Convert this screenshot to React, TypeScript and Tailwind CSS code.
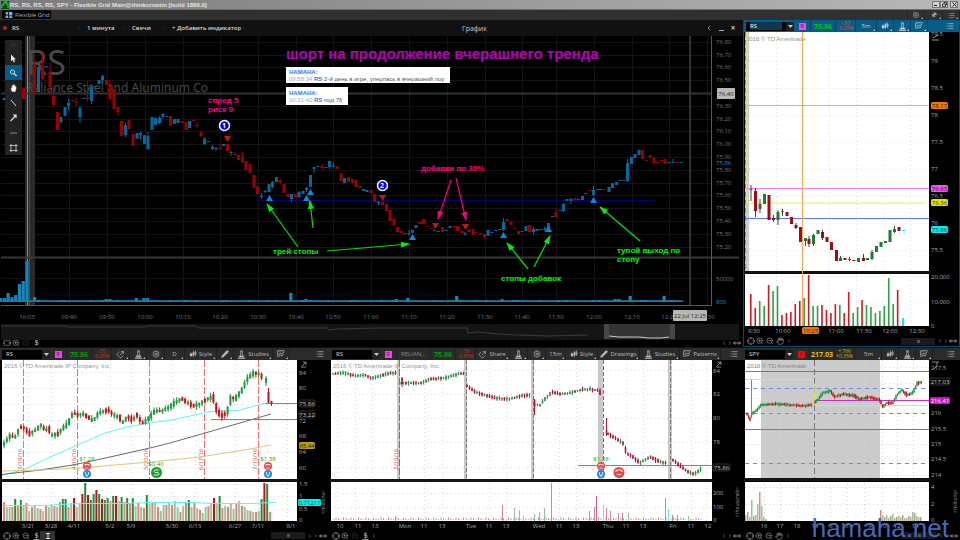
import type { ReactNode } from 'react'
import {
  ChevronDown,
  ChevronLeft,
  ChevronRight,
  Crosshair,
  FlaskConical,
  Grid2x2,
  Hand,
  List,
  MoveHorizontal,
  Pencil,
  Pin,
  Settings,
  Share,
  ZoomIn,
  ZoomOut,
} from 'lucide-react'

type Point = [number, number]
// x, body top, body bottom, rising, optional wick top and bottom
type Candle = [number, number, number, 0 | 1, number?, number?]
type Label = [string, number, number]

const minuteCandles: Candle[] = [
  [4, 98, 100, 1], [23.5, 88, 99, 0], [27, 98, 99, 1], [34.5, 64, 92, 0, 61, 93], [38.5, 67, 92, 1],
  [42.5, 67, 79, 0, 53, 80], [46, 66, 67, 1], [50, 72, 87, 0, 62, 93], [53.5, 96, 105, 0, 87, 107],
  [57.5, 112, 130, 0], [61, 117, 122, 1, 117, 124], [65, 107, 116, 1], [68.5, 103, 106, 1, 99, 110],
  [72.5, 100, 101, 0], [76, 102, 103, 0, 98, 106], [80, 108, 117, 1, 106, 123], [84, 98, 99, 1],
  [87.5, 97, 99, 0, 81, 102], [91.5, 87, 101, 1, 84, 104], [95, 86, 87, 1], [99, 80, 84, 1],
  [102.5, 76, 80, 1, 75, 83], [106.5, 80, 85, 0], [110, 84, 99, 0, 80, 100], [114, 90, 109, 0],
  [118, 107, 112, 0, 107, 116], [121.5, 121, 136, 0], [125.5, 125, 135, 1, 123, 137], [129, 120, 129, 0],
  [133, 134, 146, 0], [137, 133, 139, 1], [140.5, 133, 135, 1, 132, 140], [144.5, 135, 144, 1],
  [148, 136, 149, 1, 132, 150], [152, 117, 130, 1], [155.5, 118, 125, 1], [159.5, 118, 123, 1, 116, 124],
  [163, 114, 117, 1, 113, 119], [167, 116, 117, 1], [170.5, 116, 126, 0], [174.5, 119, 124, 1],
  [178, 119, 123, 1], [182, 121, 123, 0], [186, 122, 130, 0], [189.5, 121, 128, 1], [193.5, 120, 121, 0],
  [197, 125, 126, 0, 122, 128], [201, 132, 136, 0, 131, 137], [204.5, 139, 144, 1, 137, 145],
  [208.5, 141, 142, 1], [212.5, 147, 149, 1, 145, 150], [216, 148, 149, 1, 147, 151],
  [220, 148, 149, 0, 144, 150], [223.5, 144, 146, 1], [227.5, 144, 151, 0], [231, 152, 153, 1, 151, 156],
  [235, 154, 155, 0, 152, 156], [238.5, 155, 160, 0], [242.5, 157, 162, 0, 152, 163], [246, 161, 170, 0],
  [250, 164, 173, 0], [254, 175, 188, 0], [257.5, 187, 194, 0, 185, 195], [261.5, 196, 197, 1, 193, 199],
  [265, 191, 192, 1, 190, 193], [269, 184, 192, 1], [272.5, 182, 187, 1, 181, 188], [276.5, 177, 182, 1],
  [280, 180, 183, 0], [284, 184, 193, 0], [288, 194, 197, 0], [291.5, 194, 199, 1, 194, 202],
  [295.5, 194, 197, 0], [299, 192, 197, 1, 191, 198], [303, 191, 194, 1], [306.5, 188, 190, 1, 187, 192],
  [310.5, 175, 187, 1], [314, 167, 169, 1, 167, 173], [318, 166, 167, 1], [322, 166, 168, 0, 164, 170],
  [326, 167, 168, 1], [329.5, 161, 167, 1, 161, 169], [333.5, 166, 167, 1, 162, 167], [337, 166, 169, 0],
  [341, 173, 181, 0], [344.5, 178, 183, 1], [348.5, 177, 182, 0], [352.5, 179, 183, 0], [356, 180, 187, 0],
  [360, 186, 188, 0], [363.5, 189, 191, 1], [367, 190, 192, 1], [371, 190, 193, 0], [374.5, 194, 202, 0],
  [378.5, 202, 203, 1, 201, 205], [382.5, 202, 205, 0], [386.5, 204, 211, 0], [390, 210, 221, 0],
  [394, 219, 225, 0, 217, 226], [397.5, 227, 232, 0], [401.5, 231, 233, 0], [405, 233, 234, 1],
  [409, 233, 234, 1, 230, 236], [412.5, 230, 233, 1], [416, 225, 228, 1], [420, 222, 224, 0],
  [423.5, 219, 224, 0], [427, 226, 227, 0], [431, 228, 229, 0], [434.5, 230, 231, 1], [438.5, 231, 232, 1],
  [442.5, 227, 232, 0], [446, 230, 231, 1], [450, 226, 228, 1], [454, 226, 227, 0], [457.5, 226, 231, 0],
  [461.5, 231, 233, 0], [465, 233, 234, 1, 232, 236], [469, 229, 232, 0], [473, 229, 235, 0],
  [476.5, 232, 233, 0], [480.5, 233, 235, 0], [484.5, 234, 237, 0, 234, 239], [488, 230, 236, 1],
  [492, 232, 233, 1], [495.5, 230, 231, 1], [499.5, 229, 230, 1], [503.5, 222, 230, 1, 218, 231],
  [507, 219, 221, 0], [511, 222, 225, 0], [514.5, 228, 229, 0], [518.5, 231, 234, 0], [522, 231, 232, 1],
  [526, 226, 231, 1], [529.5, 225, 232, 0], [533.5, 229, 232, 1, 227, 234], [537, 229, 231, 1],
  [541, 229, 230, 1], [545, 228, 230, 1, 226, 232], [548.5, 223, 228, 1], [552.5, 216, 217, 1],
  [556, 212, 217, 0, 208, 218], [560, 210, 211, 1], [563.5, 204, 211, 1, 203, 212], [567, 199, 201, 1],
  [571, 199, 201, 1, 198, 204], [575, 198, 200, 0], [578.5, 199, 200, 1], [582.5, 196, 200, 1],
  [586, 193, 194, 1], [590, 190, 191, 0], [593.5, 190, 195, 1, 186, 196], [597.5, 189, 190, 1],
  [601, 189, 190, 1], [605, 189, 190, 0], [609, 187, 192, 1], [612.5, 183, 188, 1], [616.5, 182, 185, 1],
  [620, 180, 181, 1], [624, 180, 181, 1], [627.5, 163, 181, 1, 159, 182], [631.5, 157, 164, 1],
  [635, 154, 158, 1], [639, 150, 155, 1], [642.5, 150, 159, 0], [646.5, 160, 161, 0], [650, 155, 158, 0],
  [654, 158, 163, 0, 157, 164], [657.5, 162, 163, 0], [661.5, 160, 161, 0], [665, 159, 164, 0],
  [669, 162, 163, 1], [673, 162, 163, 1, 159, 163], [677, 162, 163, 0], [681, 162, 163, 1],
]

const fiveMinuteCandles: Candle[] = [
  [751, 189, 190, 1, 185, 201], [755.5, 191, 211, 0, 188, 217], [760, 204, 209, 1, 199, 213],
  [764.5, 194, 204, 1], [769, 195, 220, 0], [773.5, 218, 220, 0, 215, 222], [778, 212, 220, 1, 210, 225],
  [782.5, 211, 212, 1, 209, 216], [787, 212, 216, 0], [791.5, 217, 224, 0], [796, 225, 228, 0, 223, 229],
  [800.5, 227, 242, 0], [805.5, 238, 241, 1, 238, 246], [809, 239, 244, 0, 236, 247],
  [813.5, 235, 244, 1, 234, 246], [818, 230, 234, 1], [822.5, 232, 238, 0, 230, 240],
  [827, 237, 242, 0], [831.5, 242, 250, 0], [836.5, 250, 261, 0], [840.5, 258, 261, 1, 256, 261],
  [845, 258, 260, 0], [849.5, 259, 260, 1, 257, 261], [854, 260, 261, 0], [858.5, 258, 262, 1],
  [863.5, 258, 261, 0, 254, 261], [867.5, 258, 260, 1], [872, 252, 259, 1, 250, 260],
  [876.5, 246, 252, 1], [881, 242, 247, 1], [885.5, 241, 243, 1], [890, 230, 242, 1],
  [894.5, 229, 232, 1, 226, 233], [899, 227, 231, 0],
]

const fiveMinuteVolume = [
  32, 18, 25, 20, 41, 35, 40, 11, 13, 14, 22, 25, 28, 51, 20, 20, 21, 16, 13, 22, 21, 13, 34, 13, 19,
  26, 21, 19, 13, 15, 20, 48, 22, 36,
]
const fiveMinuteFall = [1, 1, 0, 0, 1, 0, 0, 1, 1, 1, 1, 1, 0, 1, 0, 0, 1, 1, 1, 1, 0, 1, 1, 0, 0, 1, 0, 0, 0, 0, 0, 0, 0, 1]

const dailyVolume = [
  19, 14, 14, 14, 22, 16, 21, 16, 18, 10, 14, 15, 13, 12, 10, 15, 14, 16, 15, 14, 19, 22, 22, 14, 18, 23,
  14, 17, 27, 38, 26, 21, 27, 31, 27, 22, 21, 23, 20, 25, 25, 20, 24, 19, 23, 18, 23, 15, 18, 14, 13, 26,
  17, 18, 18, 14, 10, 16, 16, 18, 16, 20, 14, 9, 15, 18, 21, 14, 18, 13, 11, 8, 14, 15, 18, 23, 18, 25,
  13, 15, 14, 17, 12, 18, 20, 15, 14, 11, 10, 9, 9, 10, 22, 38, 37, 9,
]

const dailyPath: Point[] = [
  [4, 444], [10, 436], [16, 437], [20, 427], [24, 428], [30, 434], [36, 430], [41, 425], [45, 430], [49, 429],
  [52, 435], [58, 434], [63, 428], [67, 425], [70, 420], [73, 413], [78, 415], [83, 414], [88, 417], [93, 421],
  [99, 413], [105, 411], [108, 410], [114, 415], [120, 418], [122, 423], [128, 417], [133, 420], [137, 415],
  [142, 423], [145, 422], [150, 417], [155, 411], [162, 411], [170, 407], [176, 402], [182, 399], [188, 403],
  [194, 406], [200, 404], [207, 399], [213, 397], [217, 410], [221, 416], [227, 413], [231, 398], [236, 398],
  [242, 390], [248, 378], [254, 373], [260, 374], [264, 380],
]

const quarterPaths: Point[][] = [
  [[333, 374], [345, 373], [355, 376], [365, 375], [372, 378], [380, 376], [390, 373], [397, 373]],
  [[401, 383], [410, 383], [422, 383], [430, 379], [445, 378], [455, 375], [464, 373]],
  [[467, 386], [475, 392], [485, 395], [495, 398], [510, 399], [520, 396], [530, 395]],
  [[535, 405], [540, 405], [545, 399], [552, 392], [560, 394], [570, 393], [580, 390], [590, 389], [599, 391]],
  [[608, 434], [615, 438], [623, 443], [627, 454], [632, 456], [640, 463], [650, 457], [660, 462], [667, 463]],
  [[673, 460], [680, 466], [690, 473], [695, 474], [702, 468]],
]

const spyPaths: Point[][] = [
  [[747, 414], [750, 419], [753, 413], [757, 410], [761, 405], [775, 404], [790, 405], [805, 406], [812, 405]],
  [
    [815, 402], [818, 400], [823, 393], [830, 391], [835, 397], [840, 395], [845, 394], [855, 396], [860, 399],
    [870, 397], [880, 400], [883, 407], [887, 403], [893, 403], [897, 395], [902, 390], [907, 395], [913, 393],
    [917, 384], [922, 382],
  ],
]

function createRandom(seed: number) {
  let value = seed
  return () => {
    value = (value * 16807) % 2147483647
    return value / 2147483647
  }
}

// Fills a price path with evenly spaced candles around it.
function candlesAlong(path: Point[], step: number, size: number, seed: number): Candle[] {
  const random = createRandom(seed)
  const candles: Candle[] = []
  let index = 0
  for (let x = path[0][0]; x <= path[path.length - 1][0]; x += step) {
    while (index < path.length - 2 && path[index + 1][0] < x) index += 1
    const [x0, y0] = path[index]
    const [x1, y1] = path[index + 1]
    const slope = (y1 - y0) / (x1 - x0)
    const middle = y0 + slope * (x - x0)
    const half = (0.4 + random() * 0.6) * size + Math.abs(slope) * step * 0.25
    const rising = slope + (random() - 0.5) * 2 < 0 ? 1 : 0
    candles.push([
      x,
      middle - half,
      middle + half,
      rising,
      middle - half - random() * size * 1.4,
      middle + half + random() * size * 1.4,
    ])
  }
  return candles
}

interface CandlesProps {
  data: Candle[]
  width: number
  up: string
  down: string
  wick?: string
}

function Candles({ data, width, up, down, wick }: CandlesProps) {
  return (
    <g>
      {data.map(([x, top, bottom, rising, high, low]) => {
        const color = rising ? up : down
        return (
          <g key={x}>
            {high !== undefined && low !== undefined ? (
              <rect x={x - 0.5} y={high} width={1} height={low - high} fill={wick ?? color} />
            ) : null}
            <rect x={x - width / 2} y={top} width={width} height={Math.max(1, bottom - top)} fill={color} />
          </g>
        )
      })}
    </g>
  )
}

interface GridLinesProps {
  xs: number[]
  ys: number[]
  box: [number, number, number, number]
  color: string
  dash?: string
}

function GridLines({ xs, ys, box, color, dash }: GridLinesProps) {
  const [left, top, right, bottom] = box
  return (
    <g stroke={color} strokeWidth={1} strokeDasharray={dash}>
      {xs.map((x) => (
        <line key={`x${x}`} x1={x + 0.5} x2={x + 0.5} y1={top} y2={bottom} />
      ))}
      {ys.map((y) => (
        <line key={`y${y}`} x1={left} x2={right} y1={y + 0.5} y2={y + 0.5} />
      ))}
    </g>
  )
}

function Labels({ items, anchor = 'start', fill = '#a8a8a8' }: { items: Label[]; anchor?: 'start' | 'middle'; fill?: string }) {
  return (
    <g fill={fill} textAnchor={anchor}>
      {items.map(([text, x, y]) => (
        <text key={`${text}-${x}`} x={x} y={y}>
          {text}
        </text>
      ))}
    </g>
  )
}

interface PriceTagProps {
  text: string
  x: number
  y: number
  width: number
  fill: string
  color: string
  stroke?: string
}

function PriceTag({ text, x, y, width, fill, color, stroke }: PriceTagProps) {
  return (
    <g>
      <rect x={x} y={y - 3} width={width} height={7} rx={1.5} fill={fill} stroke={stroke} strokeWidth={0.5} />
      <text x={x + width / 2} y={y + 3} textAnchor="middle" fill={color}>
        {text}
      </text>
    </g>
  )
}

function CandleIcon() {
  return (
    <svg viewBox="0 0 10 10" className="size-2 shrink-0" aria-hidden="true">
      <path d="M2.5 3v6M5.5 1v8M8 0.5v7" stroke="currentColor" strokeWidth={0.8} />
      <path d="M1 4.5h3v3H1zM4.5 3h2.2v4H4.5z" fill="currentColor" />
      <path d="M7.3 2.5H9v3H7.3z" fill="none" stroke="currentColor" strokeWidth={0.7} />
    </svg>
  )
}

function FlaskIcon() {
  return (
    <svg viewBox="0 0 10 10" className="size-[9px] shrink-0" fill="none" stroke="currentColor" aria-hidden="true">
      <path d="M3.5 1h3M4.200 1v3.500L2 8h6L5.800 4.500V1" strokeWidth={0.8} />
      <path d="M3.500 6h3l1 1.800h-5z" fill="currentColor" stroke="none" />
      <path d="M1 9.300h8" strokeWidth={1} />
    </svg>
  )
}

function PatternsIcon() {
  return (
    <svg viewBox="0 0 10 10" className="size-2 shrink-0" fill="none" stroke="currentColor" strokeWidth={1} aria-hidden="true">
      <path d="M1 1h8.5M1 1v7.5M2.5 6l2-2.5 1.6 1.6L9 2.2M2.5 8.5l2-2.4 1.6 1.4 2.2-2" />
    </svg>
  )
}

interface SymbolSelectProps {
  symbol: string
  highlighted?: boolean
}

function SymbolSelect({ symbol, highlighted }: SymbolSelectProps) {
  return (
    <div className="relative ml-0.5 flex h-[9px] w-12 shrink-0 items-center bg-black">
      <select
        aria-label="Symbol"
        defaultValue={symbol}
        className={
          highlighted
            ? 'ml-1 h-2 w-8 appearance-none bg-[#0b3a52] text-[6px] leading-none text-white'
            : 'ml-1 h-2 w-8 appearance-none bg-black text-[6px] leading-none text-[#dddddd]'
        }
      >
        <option>{symbol}</option>
      </select>
      <span className="pointer-events-none absolute right-0 flex h-[9px] w-2 items-center justify-center bg-[#222222]">
        <svg viewBox="0 0 5 3" className="w-[5px]" aria-hidden="true">
          <path d="M0 0h5L2.5 3z" fill="#cccccc" />
        </svg>
      </span>
    </div>
  )
}

interface ToolProps {
  label: string
  className: string
  children: ReactNode
}

function Tool({ label, className, children }: ToolProps) {
  return (
    <button
      type="button"
      aria-label={label}
      className={`relative flex h-full shrink-0 items-center justify-center gap-0.5 border-r border-black/25 text-[6px] leading-none ${className}`}
    >
      {children}
      <svg viewBox="0 0 2 2" className="absolute right-px bottom-px size-0.5" aria-hidden="true">
        <path d="M2 0v2H0z" fill="currentColor" />
      </svg>
    </button>
  )
}

interface QuoteProps {
  price: string
  change: string
  percent: string
  color: string
  changeColor: string
}

function Quote({ price, change, percent, color, changeColor }: QuoteProps) {
  return (
    <>
      <span className={`flex h-full w-[25px] shrink-0 items-center justify-center border-r border-black/25 text-[7px] leading-none font-bold ${color}`}>
        {price}
      </span>
      <span className={`flex h-full w-5 shrink-0 flex-col items-center justify-center border-r border-black/25 text-[5px] leading-[5px] ${changeColor}`}>
        <span>{change}</span>
        <span>{percent}</span>
      </span>
    </>
  )
}

function LinkBadge({ text, className }: { text: string; className: string }) {
  return (
    <button
      type="button"
      aria-label="Link color"
      className="flex h-full w-[17px] shrink-0 items-center justify-center border-r border-black/25"
    >
      <span className={`flex h-[7px] w-[7px] items-center justify-center text-[6px] leading-none ${className}`}>{text}</span>
    </button>
  )
}

function PanelMenu() {
  return (
    <button type="button" aria-label="Panel menu" className="ml-auto flex h-full w-[18px] shrink-0 items-center justify-center">
      <List className="size-2" />
    </button>
  )
}

interface ChartFooterProps {
  className: string
  full?: boolean
  children?: ReactNode
}

function ChartFooter({ className, full, children }: ChartFooterProps) {
  return (
    <div className={`flex items-center overflow-hidden bg-black pl-0.5 text-[#999999] ${className}`}>
      <button type="button" aria-label="Crosshair" className="flex w-[9px] justify-center">
        <Crosshair className="size-2" />
      </button>
      <button type="button" aria-label="Zoom in" className="flex w-[10px] justify-center">
        <ZoomIn className="size-2" />
      </button>
      <button
        type="button"
        aria-label="Zoom out"
        className={full ? 'flex w-[10px] justify-center' : 'flex w-[10px] justify-center text-[#333333]'}
      >
        <ZoomOut className="size-2" />
      </button>
      {children}
      <div className="ml-auto flex items-center pr-0.5">
        {full ? (
          <div className="mr-0.5 flex h-[7px] w-[34px] items-center justify-center bg-[#1a1a1a]">
            <span className="h-[3px] w-[3px] bg-[#555555]" />
          </div>
        ) : null}
        <ChevronLeft className="size-1.5" />
        <ChevronRight className="size-1.5" />
        <MoveHorizontal className="size-2 text-[#cccccc]" />
      </div>
    </div>
  )
}

function MeasureIcon() {
  return (
    <svg viewBox="0 0 7 8" className="ml-0.5 h-2 w-[7px] shrink-0" fill="none" stroke="currentColor" aria-hidden="true">
      <path d="M5 1.500H2.500v2H5v2H2M3.500.5v6" strokeWidth={0.8} />
      <path d="M.5 7.500h6" />
    </svg>
  )
}

function TitleBar() {
  return (
    <header className="flex h-[10px] items-center border-b border-[#6e6e6e] bg-linear-to-r from-[#7b7b7b] to-[#b8b8b8] pr-0.5">
      <svg viewBox="0 0 9 9" className="size-[9px] shrink-0" aria-hidden="true">
        <path d="M1 1h8v8H1z" fill="#0d4a10" />
        <path d="M2 8V5h1.500V3H5V1.500h1.500V4H8v4" fill="none" stroke="#28b52c" strokeWidth={1.4} />
      </svg>
      <h1 className="ml-px font-['Liberation_Sans',sans-serif] text-[6px] leading-none font-bold whitespace-nowrap text-[#e2e2e2]">
        RS, RS, RS, RS, SPY - Flexible Grid Main@thinkorswim [build 1886.9]
      </h1>
      <div className="ml-auto flex text-[#222222]">
        <button type="button" aria-label="Minimize" className="flex h-[7px] w-2 items-end border border-[#777777] bg-[#d4d0c8] p-px">
          <span className="h-px w-[3px] bg-current" />
        </button>
        <button type="button" aria-label="Restore" className="flex h-[7px] w-2 items-center justify-center border border-[#777777] bg-[#d4d0c8]">
          <svg viewBox="0 0 5 5" className="size-[5px]" fill="none" stroke="currentColor" strokeWidth={0.8} aria-hidden="true">
            <path d="M2 2V.5h2.500V3H3.500M.5 2h3v2.500h-3z" />
          </svg>
        </button>
        <button type="button" aria-label="Close" className="ml-0.5 flex h-[7px] w-2 items-center justify-center border border-[#777777] bg-[#d4d0c8]">
          <svg viewBox="0 0 5 5" className="size-[5px]" stroke="currentColor" aria-hidden="true">
            <path d="M.5.5l4 4M4.500.5l-4 4" />
          </svg>
        </button>
      </div>
    </header>
  )
}

function TabBar() {
  return (
    <nav className="flex h-[10px] items-start bg-[#303030] pl-0.5">
      <button type="button" className="flex h-[9px] w-[49px] items-center gap-0.5 rounded-[2px] bg-black px-[3px] text-[6px] leading-none whitespace-nowrap text-[#b5b5b5]">
        <svg viewBox="0 0 8 7" className="h-[6px] w-2 shrink-0" fill="#6fb7e0" aria-hidden="true">
          <path d="M0 0h3v3H0zM0 4h3v3H0zM4 0h4v4H4zM4 5h4v2H4z" />
        </svg>
        Flexible Grid
      </button>
      <div className="ml-auto flex h-full text-[#b0b0b0]">
        <Tool label="Layout" className="w-[18px] border-l">
          <Grid2x2 className="size-1.5" />
        </Tool>
        <Tool label="Pin" className="w-[18px]">
          <Pin className="size-1.5 rotate-45 fill-current" />
        </Tool>
        <Tool label="Menu" className="w-[17px]">
          <List className="size-[7px]" />
        </Tool>
      </div>
    </nav>
  )
}

interface PlainSelectProps {
  label: string
  value: string
  className: string
}

function PlainSelect({ label, value, className }: PlainSelectProps) {
  return (
    <div className={`flex shrink-0 items-center text-[#d8d8d8] ${className}`}>
      <select
        aria-label={label}
        defaultValue={value}
        className="h-3 w-0 grow appearance-none bg-transparent text-[6px] leading-3 font-semibold"
      >
        <option className="bg-black">{value}</option>
      </select>
      <ChevronDown className="size-1 shrink-0 text-[#555555]" />
    </div>
  )
}

const minuteTimes: Label[] = [
  ['16:03', 27, 319], ['09:40', 69, 319], ['09:50', 107, 319], ['10:00', 145, 319], ['10:10', 183, 319],
  ['10:20', 220, 319], ['10:30', 258, 319], ['10:40', 296, 319], ['10:50', 333, 319], ['11:00', 371, 319],
  ['11:10', 409, 319], ['11:20', 447, 319], ['11:30', 485, 319], ['11:40', 522, 319], ['11:50', 556, 319],
  ['12:00', 594, 319], ['12:10', 632, 319], ['12:20', 669, 319], ['12:30', 707, 319],
]

const minuteLevels = [42, 55, 67, 80, 93, 106, 119, 131, 144, 157, 170, 183, 195, 208, 221, 234, 247]

const minutePrices: Label[] = minuteLevels
  .map((y, i): Label => [(76.8 - i / 10).toFixed(2), 716, y + 2])
  .filter(([price]) => price !== '76.40')

// Tall volume bars by index; the rest stay close to the base line.
const volumeSpikes: Record<number, number> = {
  0: 4, 1: 4, 2: 9, 3: 5, 4: 7, 5: 18, 6: 21, 7: 41, 9: 5, 28: 3, 29: 3, 36: 4, 38: 4, 39: 4, 77: 9, 81: 3,
  105: 3, 108: 4, 121: 6, 133: 3, 163: 3, 164: 3, 167: 6, 176: 6,
}

const greenArrows = [
  [298, 247, 267, 204], [313, 228, 310, 201], [327, 251, 409, 244], [528, 269, 507, 243], [534, 267, 550, 236],
  [640, 241, 600, 207],
]
const pinkArrows = [[451, 180, 438, 219], [456, 178, 466, 220]]
const buyMarks: Point[] = [[269, 195], [306, 195], [310, 189], [412, 234], [503, 232], [548, 226], [593, 197]]
const sellMarks: Point[] = [[227, 136], [382, 195], [435, 223], [465, 224]]

function DrawingTools() {
  return (
    <g fill="none" stroke="#d8d8d8">
      <rect x={5} y={40} width={17} height={115} fill="#222222" stroke="none" />
      <path d="M10 44h6M10 46h6" stroke="#444444" strokeWidth={0.6} />
      <rect x={5} y={65} width={17} height={15} fill="#065b8c" stroke="none" />
      <path d="M11 54.500v6.800l1.600-1.300 1.200 2.500 1.200-.5-1.200-2.500h2.200z" fill="#e6e6e6" stroke="none" />
      <circle cx={12.500} cy={72} r={2.100} />
      <path d="M14.200 73.700l2.400 2.300" strokeWidth={1.500} />
      <path d="M11 88.500l1 3h3.300l1-4-.9-.4V86l-.9-.3-.2-.9-1 .1-.4.5-.8 0v3l-.6-.7z" fill="#ffffff" strokeWidth={0.5} />
      <path d="M11 100l5 6" />
      <path d="M10.500 121l5-5" strokeWidth={1.300} />
      <path d="M12.600 114.500h4v4z" fill="#e6e6e6" stroke="none" />
      <path d="M10 133h7" stroke="#888888" />
      <path d="M11 144v8M16 144v8M9.500 145.500h8M9.500 150.500h8" strokeWidth={0.8} />
    </g>
  )
}

function MinuteChart() {
  return (
    <svg viewBox="0 36 743 304" className="block h-auto w-full text-[6px]" role="img" aria-label="RS, 1 минута">
      <defs>
        <marker id="green-head" markerUnits="userSpaceOnUse" markerWidth={9} markerHeight={6} refX={8} refY={3} orient="auto">
          <path d="M0 0l9 3-9 3z" fill="#00f000" />
        </marker>
        <marker id="pink-head" markerUnits="userSpaceOnUse" markerWidth={9} markerHeight={6} refX={8} refY={3} orient="auto">
          <path d="M0 0l9 3-9 3z" fill="#f5007d" />
        </marker>
      </defs>
      <GridLines xs={minuteTimes.slice(1).map((time) => time[1])} ys={[...minuteLevels, 278]} box={[1, 36, 711, 305]} color="#141414" />
      <rect x={25} y={36} width={10} height={269} fill="#292929" />
      <g fill="#484848" className="font-['Noto_Sans']">
        <text x={26} y={75} className="text-[34px]">RS</text>
        <text x={26} y={92} className="text-[12px]">Reliance Steel and Aluminum Co</text>
      </g>
      <path d="M27.500 36v269" stroke="#8a8a8a" />
      <path d="M29.500 36v269" stroke="#4a4a4a" />
      <path d="M1 93.500h710M690 36v269" stroke="#333333" strokeWidth={2} />
      <path d="M1 257.500h738" stroke="#383838" strokeWidth={2} />
      <path d="M257 200.500h397" stroke="#00007a" />
      <Candles data={minuteCandles} width={3} up="#00699f" down="#9c0000" />
      <rect x={1} y={300} width={682} height={2} fill="#12618c" />
      {Array.from({ length: 181 }, (_, i) => {
        const height = volumeSpikes[i] ?? (i % 7 === 3 || i % 11 === 5 ? 2 : 1)
        return <rect key={i} x={i * 3.77 - 1} y={302 - height} width={3.2} height={height} fill="#1a84ba" />
      })}
      <path d="M1 305.500h710M711.500 36v270" stroke="#585858" fill="none" />
      {sellMarks.map(([x, y]) => (
        <path key={x} d={`M${x - 3} ${y}h7l-3.500 6z`} fill="#c01818" />
      ))}
      {buyMarks.map(([x, y]) => (
        <path key={x} d={`M${x - 3} ${y + 6}h7l-3.500-6z`} fill="#0d88dc" />
      ))}
      {greenArrows.map(([x1, y1, x2, y2]) => (
        <line key={x1} x1={x1} y1={y1} x2={x2} y2={y2} stroke="#00e000" strokeWidth={1.2} markerEnd="url(#green-head)" />
      ))}
      {pinkArrows.map(([x1, y1, x2, y2]) => (
        <line key={x1} x1={x1} y1={y1} x2={x2} y2={y2} stroke="#f5007d" strokeWidth={1.2} markerEnd="url(#pink-head)" />
      ))}
      <g fill="#0000f0" stroke="#ffffff" strokeWidth={1.5}>
        <circle cx={224.5} cy={125.5} r={5} />
        <circle cx={382.5} cy={185.5} r={5} />
      </g>
      <g fill="#ffffff" textAnchor="middle" className="text-[7px] font-bold">
        <text x={224} y={128}>1</text>
        <text x={382} y={188}>2</text>
      </g>
      <g className="font-['Liberation_Sans',sans-serif] font-bold">
        <text x={286} y={59} fill="#b800b8" className="text-[15px]">
          шорт на продолжение вчерашнего тренда
        </text>
        <g fill="#ff0080" className="text-[8px]">
          <text x={208} y={103}>спред 5</text>
          <text x={208} y={112}>риск 9</text>
          <text x={421} y={171}>добавки по 30%</text>
        </g>
        <g fill="#00f000" className="text-[8px]">
          <text x={273} y={254}>трей стопы</text>
          <text x={501} y={281}>стопы добавок</text>
          <text x={617} y={253}>тупой выход по</text>
          <text x={617} y={262}>стопу</text>
        </g>
      </g>
      <g className="font-['Liberation_Sans',sans-serif] text-[6px]">
        <rect x={286} y={67} width={164} height={16} fill="#ffffff" />
        <text x={289} y={74} fill="#2f7de0" className="font-bold">НАМАНА:</text>
        <text x={289} y={81} fill="#555555">
          <tspan fill="#a8a8a8">09:58:34 </tspan>
          <tspan fill="#2f7de0" className="font-bold">RS</tspan> 2-й день в игре, уперлась в вчерашний лоу
        </text>
        <rect x={286} y={87} width={62} height={18} fill="#ffffff" />
        <text x={289} y={95} fill="#2f7de0" className="font-bold">НАМАНА:</text>
        <text x={289} y={102} fill="#555555">
          <tspan fill="#a8a8a8">10:21:42 </tspan>
          <tspan fill="#2f7de0" className="font-bold">RS</tspan> под 76
        </text>
      </g>
      <Labels items={minutePrices} fill="#767676" />
      <Labels items={[['50000', 716, 281]]} fill="#767676" />
      <Labels items={[['75.86', 716, 165], ['800', 716, 304]]} fill="#1a8fcb" />
      <rect x={717} y={88} width={18} height={11} rx={1} fill="#b8b8b8" />
      <text x={726} y={96} textAnchor="middle" fill="#222222">76.40</text>
      <Labels items={minuteTimes} anchor="middle" fill="#767676" />
      <rect x={673} y={310} width={34} height={11} rx={1} fill="#b8b8b8" />
      <text x={690} y={318} textAnchor="middle" fill="#222222">22 Jul 12:25</text>
      <rect x={1} y={324} width={738} height={16} fill="#151515" />
      <rect x={604} y={324} width={71} height={15} fill="#333333" />
      <path d="M604 324h5v15h-5zM670 324h5v15h-5z" fill="#474747" />
      <path
        d="M1 326h63l4 1h76l3-1h48l4 2h128l2 2 8-1 40-1h90l1 5 10-1 20 2 20 1 30 1 40-1"
        fill="none"
        stroke="#3c3c3c"
      />
      <path d="M609 336l10 1h20l10 1 12 0 8-1" fill="none" stroke="#c8c8c8" />
      <DrawingTools />
    </svg>
  )
}

function MinutePanel() {
  return (
    <section className="flex min-w-0 flex-col bg-black">
      <div className="flex h-4 items-center bg-[#111111] pl-[3px]">
        <span className="mr-[5px] size-1 rounded-full bg-[#c41f1f]" />
        <PlainSelect label="Symbol" value="RS" className="w-[69px]" />
        <PlainSelect label="Интервал" value="1 минута" className="ml-1.5 w-[38px]" />
        <PlainSelect label="Тип графика" value="Свечи" className="ml-[7px] w-[33px]" />
        <PlainSelect label="Индикатор" value="+ Добавить индикатор" className="ml-[7px] w-[73px]" />
        <h2 className="ml-[217px] text-[7px] leading-none text-[#c8c8c8]">График</h2>
        <div className="ml-auto flex items-center gap-1 pr-1.5 text-[#cccccc]">
          <button type="button" aria-label="Collapse">
            <ChevronLeft className="size-2" />
          </button>
          <button type="button" aria-label="Minimize" className="flex h-2 w-2 items-end justify-center pb-px">
            <span className="h-px w-[5px] bg-[#aaaaaa]" />
          </button>
          <button type="button" aria-label="Close" className="flex h-2 w-2 items-center justify-center text-[8px] leading-none font-bold">
            ×
          </button>
        </div>
      </div>
      <MinuteChart />
      <ChartFooter className="h-[6px]">
        <MeasureIcon />
      </ChartFooter>
    </section>
  )
}

const fiveMinuteLevels = [34, 61, 88, 115, 142, 169, 196, 223, 250]

function FiveMinutePanel() {
  return (
    <section className="flex min-w-0 flex-col border-x border-b border-[#0a4a68] bg-black">
      <div className="flex h-3 items-center bg-[#065d87] text-[#c0d4de]">
        <SymbolSelect symbol="RS" highlighted />
        <LinkBadge text="9" className="bg-[#ff40ff] text-[#5a005a]" />
        <Quote price="75.86" change="-.50" percent="-0.65%" color="text-[#00c41a]" changeColor="text-[#e8432a]" />
        <Tool label="Interval" className="w-[21px]">5m</Tool>
        <Tool label="Style" className="w-[17px]"><CandleIcon /></Tool>
        <Tool label="Studies" className="w-[17px]"><FlaskIcon /></Tool>
        <Tool label="Patterns" className="w-[17px]"><PatternsIcon /></Tool>
        <PanelMenu />
      </div>
      <svg viewBox="744 32 215 304" className="block h-auto w-full text-[6px]" role="img" aria-label="RS, 5m">
        <path d="M745 32h184v239H745zM745 274h184v52H745z" fill="#ffffff" />
        <GridLines
          xs={[749, 776, 803, 829, 856, 883, 910]}
          ys={[...fiveMinuteLevels.slice(1), 276, 302]}
          box={[745, 32, 929, 326]}
          color="#e2e2e2"
          dash="1 3"
        />
        <rect x={745} y={32} width={4} height={239} fill="#cbcbcb" />
        <text x={746} y={41} fill="#909090" className="font-['Liberation_Sans',sans-serif]">2016 © TD Ameritrade</text>
        <path d="M747 32v171h179" stroke="#ece95a" fill="none" />
        <path d="M745.500 32v239" stroke="#8d8d60" strokeDasharray="5 3" />
        <rect x={744} y={271} width={186} height={3} fill="#111111" />
        <path d="M745 188.500h184" stroke="#ff7cff" />
        <path d="M745 218.500h184" stroke="#5a74ff" />
        <path d="M745 105.500h184M802.500 32v294" stroke="#f5a860" />
        <Candles data={fiveMinuteCandles} width={3} up="#1f7a34" down="#a00c14" wick="#444444" />
        <rect x={902} y={230} width={3} height={1} fill="#00e5e5" />
        {fiveMinuteVolume.map((height, i) => (
          <rect key={i} x={750 + i * 4.45} y={326 - height} width={1.6} height={height} fill={fiveMinuteFall[i] ? '#d0181e' : '#2fa045'} />
        ))}
        <rect x={902} y={318} width={2} height={8} fill="#00f0f0" />
        <Labels
          items={[
            ['79.5', 931, 36], ['79', 931, 63], ['78.5', 931, 90], ['78', 931, 117], ['77.5', 931, 144], ['77', 931, 171],
            ['76.5', 931, 198], ['76', 931, 225], ['75.5', 931, 252], ['20,000', 931, 279], ['10,000', 931, 304], ['0', 931, 328],
          ]}
        />
        <path d="M932 40h7M933 38l5-3" stroke="#bbbbbb" strokeWidth={0.8} />
        <PriceTag text="78.17" x={931} y={105} width={17} fill="#ee7700" color="#3a1c00" />
        <PriceTag text="76.63" x={931} y={188} width={17} fill="#ee55ee" color="#3d003d" />
        <PriceTag text="76.36" x={931} y={202} width={17} fill="#e6df00" color="#3a3800" />
        <PriceTag text="75.86" x={931} y={229} width={17} fill="#00f0f0" color="#003a3a" />
        <Labels
          anchor="middle"
          items={[
            ['9:30', 754, 333], ['10:00', 783, 333], ['11:00', 836, 333], ['11:30', 864, 333], ['12:00', 890, 333], ['12:30', 917, 333],
          ]}
        />
        <PriceTag text="10:25" x={802} y={330} width={17} fill="#ee7700" color="#3a1c00" />
      </svg>
      <ChartFooter className="h-[10px]" full>
        <Hand className="ml-px size-2" />
        <ChevronLeft className="ml-0.5 size-1.5" />
      </ChartFooter>
    </section>
  )
}

const dailyCandles: Candle[] = [
  ...candlesAlong(dailyPath, 2.83, 2.2, 17),
  [266, 378, 383, 1, 376, 386],
  [268.5, 392, 402, 0, 388, 403],
  [271.5, 401, 404, 0, 401, 406],
]

const expiryDates: Label[] = [['3/18/16', 23, 470], ['4/15/16', 77, 470], ['5/20/16', 149, 470], ['6/17/16', 204, 470], ['7/15/16', 258, 470]]

function EarningsMark({ x, amount }: { x: number; amount: string }) {
  return (
    <g textAnchor="middle">
      <text x={x} y={461} fill="#12a812">{amount}</text>
      <circle cx={x} cy={466} r={4} fill="#f04a4a" />
      <path d={`M${x - 2} 466v-1.500h4v1.500M${x - 1.5} 468h3`} stroke="#ffffff" strokeWidth={0.8} fill="none" />
      <circle cx={x} cy={474} r={4} fill="#2f86e4" />
      <path d={`M${x - 1.5} 472v2a1.500 1.500 0 0 0 3 0v-2M${x} 475v2`} stroke="#ffffff" strokeWidth={0.8} fill="none" />
    </g>
  )
}

function DailyPanel() {
  return (
    <section className="flex min-w-0 flex-col border-t border-[#111111] bg-black">
      <div className="flex h-3 items-center bg-[#2b2b2b] text-[#bcbcbc]">
        <SymbolSelect symbol="RS" />
        <LinkBadge text="9" className="bg-[#ee44ee] text-[#5a005a]" />
        <Quote price="75.86" change="-.50" percent="-0.65%" color="text-[#009c14]" changeColor="text-[#d23a14]" />
        <Tool label="Share" className="w-[18px]"><Share className="size-2 rotate-45" /></Tool>
        <Tool label="Analyze" className="w-[17px]"><FlaskIcon /></Tool>
        <Tool label="Settings" className="w-[18px]"><Settings className="size-2" /></Tool>
        <Tool label="Interval" className="w-5">D</Tool>
        <Tool label="Style" className="w-8"><CandleIcon />Style</Tool>
        <Tool label="Drawings" className="w-[17px]"><Pencil className="size-2 fill-current" /></Tool>
        <Tool label="Studies" className="w-[39px]"><FlaskIcon />Studies</Tool>
        <Tool label="Patterns" className="w-[17px]"><PatternsIcon /></Tool>
        <PanelMenu />
      </div>
      <svg viewBox="0 360 329 171" className="block h-auto w-full text-[6px]" role="img" aria-label="RS, D">
        <path d="M2 360h295v119H2zM2 482h295v39H2z" fill="#ffffff" />
        <GridLines
          xs={[28, 51, 74, 110, 131, 172, 195, 235, 258, 287]}
          ys={[372, 388, 404, 420, 436, 452, 467, 484, 496, 509]}
          box={[2, 360, 297, 521]}
          color="#dddddd"
          dash="1 3"
        />
        <text x={4} y={368} fill="#959595" className="font-['Liberation_Sans',sans-serif]">
          2016 © TD Ameritrade IP Company, Inc.
        </text>
        <rect y={479} width={298} height={3} fill="#151515" />
        {expiryDates.map(([text, x, y]) => (
          <g key={text}>
            <path d={`M${x + 0.5} 360v119`} stroke="#f07070" strokeDasharray="7 2" />
            <text transform={`translate(${x - 1} ${y}) rotate(-90)`} fill="#e84848">{text}</text>
          </g>
        ))}
        <g fill="none">
          <path d="M2 475L23 470 50 457 80 444 105 433 127 427 150 423 172 420 208 412 240 410 258 405 271 402" stroke="#5ff5f5" />
          <path d="M2 474.500L40 470 73 465 110 457 150 448 170 443 205 433 240 423 271 414" stroke="#6a6a6a" />
          <path d="M2 471L40 470 80 468 150 462 200 457 250 449 271 445" stroke="#dcc878" />
          <path d="M266 403.500h31M211 419.500h86" stroke="#6b7bf0" />
        </g>
        <Candles data={dailyCandles} width={2} up="#1f9a3c" down="#cc1016" />
        {dailyVolume.map((height, i) => {
          const falling = (i * 7) % 5 < 2
          const strong = height > 20
          const fill = falling ? (strong ? '#c01018' : '#e88080') : strong ? '#238a3a' : '#92c89a'
          return <rect key={i} x={3 + i * 2.8} y={521 - height} width={2} height={height} fill={fill} />
        })}
        <path d="M2 505.500h40l40-2h40l30-1h40l20 1h40l20-1h4" stroke="#5ff5f5" fill="none" />
        <EarningsMark x={87} amount="$1.28" />
        <EarningsMark x={268} amount="$1.38" />
        <text x={156} y={466} textAnchor="middle" fill="#12a812">$0.40</text>
        <circle cx={156.5} cy={472.5} r={5.500} fill="#17a02c" />
        <path d="M159 470h-4q-2 1.200 0 2.500h3q2 1.300 0 2.500h-4" stroke="#d8f5d8" fill="none" />
        <Labels
          items={[
            ['84', 299, 375], ['80', 299, 390], ['72', 299, 423], ['68', 299, 438], ['64', 299, 454], ['60', 299, 470],
            ['1.5', 299, 486], ['1', 299, 498], ['0.5', 299, 511], ['0', 299, 522],
          ]}
        />
        <path d="M301 367h5M302 366l4-4m-3 0h3v3" stroke="#aaaaaa" strokeWidth={0.8} fill="none" />
        <PriceTag text="75.86" x={299} y={403} width={16} fill="#050505" color="#cccccc" stroke="#666666" />
        <PriceTag text="73.22" x={299} y={414} width={16} fill="#050505" color="#cccccc" stroke="#666666" />
        <PriceTag text="65.44" x={299} y={445} width={16} fill="#c09a10" color="#221a00" />
        <PriceTag text="0.71217" x={298} y={502} width={23} fill="#00f0f0" color="#003a3a" />
        <text transform="translate(325 502) rotate(-90)" textAnchor="middle" fill="#999999" className="text-[5px]">
          &lt;millions&gt;
        </text>
        <Labels
          anchor="middle"
          items={[
            ['3/21', 28, 528], ['3/28', 51, 528], ['4/11', 74, 528], ['5/2', 110, 528], ['5/9', 131, 528],
            ['5/30', 172, 528], ['6/13', 195, 528], ['6/27', 235, 528], ['7/11', 258, 528], ['8/1', 291, 528],
          ]}
        />
      </svg>
      <ChartFooter className="h-[9px]" full>
        <MeasureIcon />
        <button type="button" aria-label="Text mode" className="flex h-[9px] w-[15px] items-center justify-center bg-[#333333]">
          <svg viewBox="0 0 6 6" className="size-1.5" stroke="#dddddd" aria-hidden="true">
            <path d="M1 .5h4M3 1v4M1 5.500h4" />
          </svg>
        </button>
      </ChartFooter>
    </section>
  )
}

const quarterCandles: Candle[] = [
  ...quarterPaths.flatMap((path, i) => candlesAlong(path, 2.5, 1.3, 31 + i)),
  [402, 378, 384, 0, 377, 387],
  [534.5, 400, 404, 0, 399, 415],
  [600, 390, 395, 0, 388, 395],
  [606.5, 430, 434, 0, 418, 436],
]

const quarterVolume: [number, number, string][] = [
  [502, 16, '#d08898'], [514, 13, '#90c89c'], [519, 11, '#90c89c'], [523, 5, '#90c89c'], [534, 7, '#90c89c'],
  [539, 9, '#90c89c'], [544, 13, '#90c89c'], [551, 38, '#78b888'], [589, 10, '#d08898'], [594, 14, '#d08898'],
  [596, 25, '#c86078'], [603, 16, '#70e8e8'], [606, 13, '#d08898'], [610, 10, '#d08898'], [618, 8, '#d08898'],
  [622, 8, '#d08898'], [628, 8, '#90c89c'], [395, 5, '#d08898'], [665, 23, '#78b888'], [668, 12, '#70e8e8'],
  [672, 6, '#d08898'], [677, 6, '#d08898'], [688, 5, '#90c89c'],
]

function QuarterHourPanel() {
  return (
    <section className="flex min-w-0 flex-col border-t border-[#111111] bg-black">
      <div className="flex h-3 items-center bg-[#2b2b2b] pl-px text-[#bcbcbc]">
        <SymbolSelect symbol="RS" />
        <LinkBadge text="9" className="bg-[#ee44ee] text-[#5a005a]" />
        <span className="flex h-full w-[34px] shrink-0 items-center justify-center border-r border-black/25 text-[6px] leading-none text-[#888888]">
          RELIAN...
        </span>
        <Quote price="75.86" change="-.50" percent="-0.65%" color="text-[#009c14]" changeColor="text-[#d23a14]" />
        <Tool label="Share" className="w-[34px]"><Share className="size-2 rotate-45" />Share</Tool>
        <Tool label="Analyze" className="w-[18px]"><FlaskIcon /></Tool>
        <Tool label="Settings" className="w-[18px]"><Settings className="size-2" /></Tool>
        <Tool label="Interval" className="w-5">15m</Tool>
        <Tool label="Style" className="w-8"><CandleIcon />Style</Tool>
        <Tool label="Drawings" className="w-[42px]"><Pencil className="size-2 fill-current" />Drawings</Tool>
        <Tool label="Studies" className="w-10"><FlaskIcon />Studies</Tool>
        <Tool label="Patterns" className="w-[41px]"><PatternsIcon />Patterns</Tool>
        <PanelMenu />
      </div>
      <svg viewBox="329 360 414 171" className="block h-auto w-full text-[6px]" role="img" aria-label="RS, 15m">
        <path d="M331 360h381v119H331zM331 482h381v39H331z" fill="#ffffff" />
        <GridLines
          xs={[337, 355, 372, 424, 442, 489, 506, 559, 576, 626, 643, 691, 706]}
          ys={[370, 394, 418, 442, 467, 493, 507]}
          box={[331, 360, 712, 521]}
          color="#dddddd"
          dash="1 3"
        />
        <path d="M397 360h3v119h-3zM464 360h3v119h-3zM531 360h3v119h-3zM598 360h5v119h-5zM668 360h4v119h-4z" fill="#c8c8c8" />
        <path d="M466.500 360v119M533.500 360v119M603.500 360v119M670.500 360v119" stroke="#777777" strokeDasharray="4 2" />
        <path d="M399.500 360v119" stroke="#e04848" strokeDasharray="7 2" />
        <text x={333} y={368} fill="#959595" className="font-['Liberation_Sans',sans-serif]">
          2016 © TD Ameritrade IP Company, Inc.
        </text>
        <rect x={330} y={479} width={383} height={3} fill="#151515" />
        <text transform="translate(398 470) rotate(-90)" fill="#e84848">7/15/16</text>
        <path d="M578 465.500h134" stroke="#6b7bf0" />
        <Candles data={quarterCandles} width={1.600} up="#2a9a48" down="#b8143c" />
        {Array.from({ length: 148 }, (_, i) => (
          <rect
            key={i}
            x={333 + i * 2.5}
            y={520 - (1 + ((i * 5) % 3) * 0.8)}
            width={1}
            height={1 + ((i * 5) % 3) * 0.8}
            fill={i % 3 ? '#d08898' : '#90c89c'}
          />
        ))}
        {quarterVolume.map(([x, height, fill]) => (
          <rect key={x} x={x} y={521 - height} width={1} height={height} fill={fill} />
        ))}
        <EarningsMark x={601} amount="$1.38" />
        <circle cx={619} cy={472.500} r={5.500} fill="#ee4444" />
        <path d="M616 472v-1.500q3-1.500 6 0V472M617 474.500h4" stroke="#ffffff" fill="none" />
        <Labels
          items={[
            ['84', 713, 373], ['82', 713, 396], ['80', 713, 420], ['78', 713, 444], ['200', 713, 495], ['100', 713, 509], ['0', 713, 522],
          ]}
        />
        <path d="M716 367h5M717 366l4-4m-3 0h3v3" stroke="#aaaaaa" strokeWidth={0.8} fill="none" />
        <PriceTag text="75.86" x={713} y={467} width={17} fill="#050505" color="#cccccc" stroke="#666666" />
        <text transform="translate(739 502) rotate(-90)" textAnchor="middle" fill="#999999" className="text-[5px]">
          &lt;thousands&gt;
        </text>
        <Labels
          anchor="middle"
          items={[
            ['10', 340, 528], ['11', 358, 528], ['13', 375, 528], ['Mon', 405, 528], ['11', 424, 528], ['13', 442, 528],
            ['Tue', 471, 528], ['11', 489, 528], ['13', 506, 528], ['Wed', 539, 528], ['11', 559, 528], ['13', 576, 528],
            ['Thu', 608, 528], ['11', 626, 528], ['13', 643, 528], ['Fri', 673, 528], ['11', 691, 528], ['12', 708, 528],
          ]}
        />
      </svg>
      <ChartFooter className="h-[9px]">
        <MeasureIcon />
        <ChevronLeft className="ml-0.5 size-1.5" />
      </ChartFooter>
    </section>
  )
}

const spyCandles = spyPaths.flatMap((path, i) => candlesAlong(path, 1.5, 1.1, 51 + i))

const spyVolume: [number, number][] = [
  [745, 6], [747, 9], [749, 4], [751, 21], [753, 5], [755, 6], [757, 17], [759, 29], [761, 15], [763, 4], [765, 2],
  [880, 11], [882, 6], [884, 4], [886, 6], [888, 3], [890, 5], [892, 7], [894, 3], [896, 4], [898, 5], [900, 4],
  [902, 6], [904, 3], [906, 3], [908, 5], [910, 4], [912, 9], [914, 8], [916, 5], [918, 4], [920, 4],
]

function SpyPanel() {
  return (
    <section className="flex min-w-0 flex-col border-t border-[#111111] bg-black">
      <div className="flex h-3 items-center bg-[#2b2b2b] text-[#bcbcbc]">
        <SymbolSelect symbol="SPY" />
        <LinkBadge text="!" className="rounded-[1px] bg-[#e80c0c] text-black" />
        <Quote price="217.03" change="+.766" percent="+0.35%" color="text-[#e0c400]" changeColor="text-[#d0b400]" />
        <Tool label="Interval" className="ml-px w-[26px]">5m</Tool>
        <Tool label="Style" className="w-[17px]"><CandleIcon /></Tool>
        <Tool label="Studies" className="w-[17px]"><FlaskIcon /></Tool>
        <Tool label="Patterns" className="w-[17px]"><PatternsIcon /></Tool>
        <PanelMenu />
      </div>
      <svg viewBox="743 360 217 171" className="block h-auto w-full text-[6px]" role="img" aria-label="SPY, 5m">
        <path d="M745 360h184v119H745zM745 482h184v39H745z" fill="#ffffff" />
        <rect x={761} y={360} width={119} height={118} fill="#cbcbcb" />
        <GridLines
          xs={[764, 780, 797, 814, 830, 847, 864, 882, 897, 913]}
          ys={[367, 383, 398, 413, 444, 459, 475, 487, 504]}
          box={[745, 360, 929, 521]}
          color="#d8d8d8"
          dash="1 3"
        />
        <text x={747} y={368} fill="#858585" className="font-['Liberation_Sans',sans-serif]">2016 © TD Ameritrade</text>
        <rect x={744} y={478} width={186} height={3} fill="#151515" />
        <path d="M745 371.500h184M745 429.500H929" stroke="#6b6bf0" fill="none" />
        <path d="M745 388.500h184M745 413.500h184M745 463.500h184" stroke="#6b8bf0" strokeDasharray="4 4" />
        <path d="M814.500 360v118" stroke="#777777" strokeDasharray="6 3" />
        <path d="M745 379.500h68.500l1.500 26h112" stroke="#e6e650" fill="none" />
        <path d="M815 400.500h114" stroke="#cc2acc" />
        <path d="M751.500 380v35" stroke="#4aa860" />
        <Candles data={spyCandles} width={1.400} up="#2a9a48" down="#cc2020" />
        {spyVolume.map(([x, height], i) => (
          <rect key={x} x={x} y={521 - height} width={1.5} height={height} fill={i % 3 === 1 || i === 11 ? '#e88888' : '#90c89c'} />
        ))}
        <Labels
          items={[
            ['217.5', 931, 370], ['216', 931, 415], ['215.5', 931, 431], ['215', 931, 446], ['214.5', 931, 461],
            ['214', 931, 477], ['4', 931, 489], ['2', 931, 506], ['0', 931, 522],
          ]}
        />
        <path d="M932 362h7M937 362v4l-3 3" stroke="#aaaaaa" strokeWidth={0.8} fill="none" />
        <PriceTag text="217.03" x={930} y={381} width={20} fill="#050505" color="#cccccc" stroke="#666666" />
        <PriceTag text="216.41" x={930} y={400} width={20} fill="#cc10cc" color="#ffffff" />
        <text transform="translate(957 501) rotate(-90)" textAnchor="middle" fill="#999999" className="text-[5px]">
          &lt;millions&gt;
        </text>
        <Labels
          anchor="middle"
          items={[
            ['16', 764, 528], ['17', 780, 528], ['18', 797, 528], ['19', 815, 528], ['5', 831, 528], ['6', 847, 528],
            ['7', 859, 528], ['9', 870, 528], ['10', 883, 528], ['12', 897, 528], ['14', 915, 528],
          ]}
        />
      </svg>
      <ChartFooter className="h-[9px]" full>
        <Hand className="ml-px size-2" />
        <ChevronLeft className="ml-0.5 size-1.5" />
      </ChartFooter>
    </section>
  )
}

export default function App() {
  return (
    <div className="relative min-h-screen overflow-hidden bg-black font-['Open_Sans',sans-serif]">
      <TitleBar />
      <TabBar />
      <main>
        <div className="grid grid-cols-[743fr_217fr]">
          <MinutePanel />
          <FiveMinutePanel />
        </div>
        <div className="grid grid-cols-[329fr_414fr_217fr]">
          <DailyPanel />
          <QuarterHourPanel />
          <SpyPanel />
        </div>
      </main>
      <a
        href="#hamaha"
        className="absolute right-[11px] bottom-0 font-['Liberation_Sans',sans-serif] text-[26px] leading-6 text-[#4468bb]"
      >
        hamaha.net
      </a>
    </div>
  )
}
